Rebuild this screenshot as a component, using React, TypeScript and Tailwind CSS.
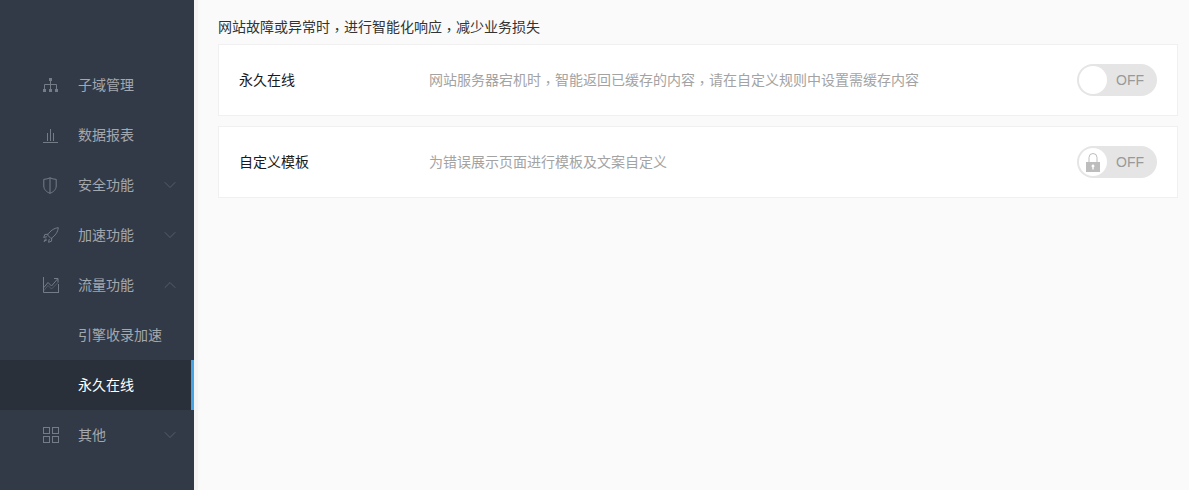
import React from 'react';
import { ChevronDown, ChevronUp } from 'lucide-react';

const font = 'font-["Liberation_Sans","Noto_Sans_CJK_SC",sans-serif]';

function TreeIcon() {
  return (
    <svg width="15" height="15" viewBox="0 0 15 15" fill="none" stroke="#747c88" strokeWidth="1">
      <path d="M7.500 2v10M1.500 11V6.500h12V11" />
      <rect x="6" y="0" width="3" height="3" fill="#747c88" stroke="none" />
      <rect x="0" y="11" width="3" height="3" fill="#747c88" stroke="none" />
      <rect x="6" y="11" width="3" height="3" fill="#747c88" stroke="none" />
      <rect x="12" y="11" width="3" height="3" fill="#747c88" stroke="none" />
    </svg>
  );
}

function BarsIcon() {
  return (
    <svg width="15" height="15" viewBox="0 0 15 15" fill="none" stroke="#747c88" strokeWidth="1">
      <path d="M0 14.500h15M4.500 13V5M7.500 13V1M10.500 13V5" />
    </svg>
  );
}

function ShieldIcon() {
  return (
    <svg width="14" height="17" viewBox="0 0 14 17" fill="none" stroke="#747c88" strokeWidth="1">
      <path d="M7 .8C5 1.800 3 2.300.8 2.300V9c0 3.500 2.700 6 6.200 7.300 3.500-1.300 6.200-3.800 6.200-7.300V2.300C11 2.300 9 1.800 7 .8zM7 .8v15.500" />
    </svg>
  );
}

function RocketIcon() {
  return (
    <svg width="16" height="16" viewBox="0 0 16 16" fill="none" stroke="#747c88" strokeWidth="1">
      <path d="M15.300 .7C11 1.200 7.500 3.500 4.500 8l3.500 3.500c4.500-3 6.800-6.500 7.300-10.800zM5 7.200 1.800 7.500.7 10.500l3.200-.8M8.800 11l-.3 3.200-3 1.100.8-3.200M2.800 11.500 1 14.500l3-1.800" />
    </svg>
  );
}

function ChartIcon() {
  return (
    <svg width="16" height="16" viewBox="0 0 16 16" fill="none" stroke="#747c88" strokeWidth="1">
      <path d="M.5 0v15.500H16M.9 10.500 5 5.500l3.500 3.500 6-7M11 1.500h4V5.500M15.500 7v8" />
      <path d="M.5 14 5 8.500l3.500 3.500 6.500-6.500" strokeOpacity="0.5" />
    </svg>
  );
}

function GridIcon() {
  return (
    <svg width="16" height="16" viewBox="0 0 16 16" fill="none" stroke="#747c88" strokeWidth="1">
      <rect x="0.500" y="0.500" width="6" height="6" />
      <rect x="9.500" y="0.500" width="6" height="6" />
      <rect x="0.500" y="9.500" width="6" height="6" />
      <rect x="9.500" y="9.500" width="6" height="6" />
    </svg>
  );
}

function NavRow({ icon, label, arrow }: { icon?: React.ReactNode; label: string; arrow?: 'up' | 'down' }) {
  return (
    <div className="h-[50px] flex items-center text-[14px] text-[#a3a8af]">
      <div className="w-[43px] shrink-0" />
      <div className="w-[35px] shrink-0 flex items-center">{icon}</div>
      <span className="flex-1">{label}</span>
      {arrow === 'down' && <ChevronDown className="w-[20px] h-[20px] text-[#5c6470] mr-[14px]" strokeWidth={1} />}
      {arrow === 'up' && <ChevronUp className="w-[20px] h-[20px] text-[#5c6470] mr-[14px]" strokeWidth={1} />}
    </div>
  );
}

function Toggle({ locked }: { locked?: boolean }) {
  return (
    <div className="w-[80px] h-[32px] rounded-full bg-[#e5e5e5] flex items-center p-[2px] shrink-0">
      <div className="w-[28px] h-[28px] rounded-full bg-white flex items-center justify-center">
        {locked && (
          <svg width="14" height="19" viewBox="0 0 14 19">
            <path d="M3 9V4.500a4 4 0 0 1 8 0V9" fill="none" stroke="#bdbdbd" strokeWidth="1" />
            <path fillRule="evenodd" d="M0 9h14v10H0zM7 11.500a1.500 1.500 0 0 0-.7 2.800V16.500h1.400v-2.200A1.500 1.500 0 0 0 7 11.500z" fill="#bdbdbd" />
          </svg>
        )}
      </div>
      <span className="ml-[9px] text-[14px] text-[#999999] leading-none">OFF</span>
    </div>
  );
}

function Card({ title, desc, locked }: { title: string; desc: React.ReactNode; locked?: boolean }) {
  return (
    <div className="h-[72px] bg-white border border-[#f0f0f0] flex items-center pl-[20px] pr-[20px]">
      <div className="w-[190px] shrink-0 text-[14px] leading-[20px] mb-[1px] text-[#1a1a1a]">{title}</div>
      <div className="flex-1 text-[14px] leading-[20px] mb-[1px] text-[#a3a3a3]">{desc}</div>
      <Toggle locked={locked} />
    </div>
  );
}

// the reference draws the full-width comma centred and low on the line
function Comma() {
  return <span className='font-["Noto_Sans_CJK_TC",sans-serif] leading-none align-[-3px]'>，</span>;
}

export default function App() {
  return (
    <div className={`${font} w-[1189px] h-[490px] flex overflow-hidden bg-[#fafafa]`}>
      <aside className="w-[194px] shrink-0 bg-[#323a47] pt-[60px]">
        <NavRow icon={<TreeIcon />} label="子域管理" />
        <NavRow icon={<BarsIcon />} label="数据报表" />
        <NavRow icon={<ShieldIcon />} label="安全功能" arrow="down" />
        <NavRow icon={<RocketIcon />} label="加速功能" arrow="down" />
        <NavRow icon={<ChartIcon />} label="流量功能" arrow="up" />
        <NavRow label="引擎收录加速" />
        <div className="bg-[#2a303a] border-r-[3px] border-[#45a5e6] [&>div]:text-white">
          <NavRow label="永久在线" />
        </div>
        <NavRow icon={<GridIcon />} label="其他" arrow="down" />
      </aside>
      <div className="w-[4px] shrink-0 bg-[#f4f4f4]" />
      <main className="flex-1 pl-[20px] pr-[11px] pt-[17px]">
        <p className="h-[20px] text-[14px] leading-[20px] text-[#333333] mb-[7px]">
          网站故障或异常时<Comma />进行智能化响应<Comma />减少业务损失
        </p>
        <div className="flex flex-col gap-[10px]">
          <Card
            title="永久在线"
            desc={<>网站服务器宕机时<Comma />智能返回已缓存的内容<Comma />请在自定义规则中设置需缓存内容</>}
          />
          <Card title="自定义模板" desc="为错误展示页面进行模板及文案自定义" locked />
        </div>
      </main>
    </div>
  );
}
